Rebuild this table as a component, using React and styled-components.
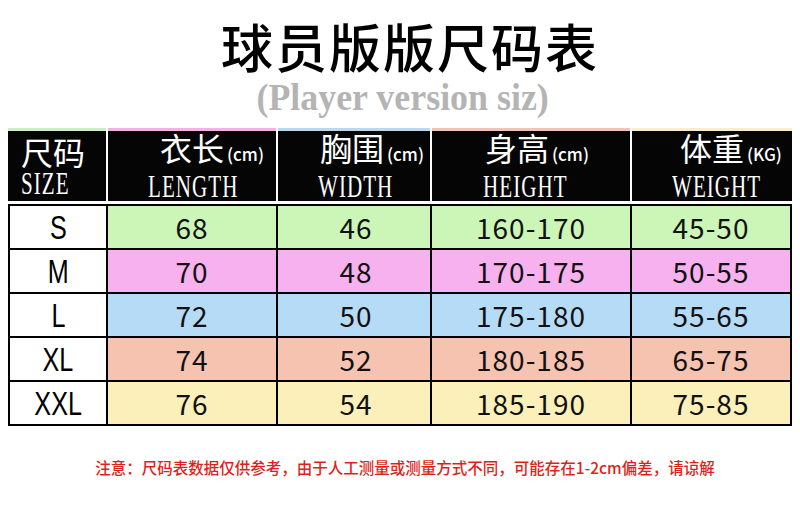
import React from "react";
import styled, { createGlobalStyle } from "styled-components";

const Global = createGlobalStyle`
  html, body { margin: 0; padding: 0; background: #fff; }
  body { width: 800px; height: 511px; overflow: hidden; }
`;

const Page = styled.div`
  width: 800px;
  height: 511px;
  display: flex;
  flex-direction: column;
  align-items: center;
  background: #fff;
`;

const Title = styled.h1`
  margin: 18px 0 0;
  padding-left: 20px;
  font-family: "Noto Sans CJK SC", sans-serif;
  font-weight: 500;
  font-size: 52px;
  line-height: 56px;
  color: #000;
  letter-spacing: 2px;
`;

const Subtitle = styled.div`
  margin-top: 6px;
  padding-left: 5px;
  font-family: "Liberation Serif", serif;
  font-weight: 700;
  font-size: 37px;
  line-height: 36px;
  color: #b4b4b4;
  transform: scaleX(0.97);
`;

const Table = styled.div`
  width: 784px;
  margin-top: 12px;
  display: flex;
  flex-direction: column;
  gap: 3px;
`;

const HeaderRow = styled.div`
  display: grid;
  grid-template-columns: 98px 168px 152px 198px 160px;
  column-gap: 2px;
`;

const HeadCell = styled.div`
  height: 70px;
  background: #050505;
  border-top: 3px solid ${(p) => p.$strip};
  color: #fff;
  display: flex;
  flex-direction: column;
  justify-content: center;
  padding-left: ${(p) => p.$pad}px;
`;

const HeadCn = styled.div`
  font-family: "Noto Sans CJK SC", sans-serif;
  font-weight: 400;
  font-size: 32px;
  line-height: 32px;
  margin-top: 2px;
  padding-left: ${(p) => p.$indent || 0}px;
  white-space: nowrap;
`;

const Unit = styled.span`
  font-family: "Noto Sans CJK SC", sans-serif;
  font-size: 17px;
  font-weight: 500;
  margin-left: 3px;
`;

const HeadEn = styled.div`
  font-family: "Liberation Serif", serif;
  font-size: 31px;
  line-height: 33px;
  letter-spacing: 1.5px;
  white-space: nowrap;
  transform: scaleX(0.68);
  transform-origin: left center;
`;

const Body = styled.div`
  display: grid;
  grid-template-columns: 96px 168px 152px 198px 158px;
  grid-auto-rows: 42px;
  gap: 2px;
  padding: 2px;
  background: #000;
`;

const Cell = styled.div`
  background: ${(p) => p.$bg};
  display: flex;
  align-items: center;
  justify-content: center;
  font-family: "Noto Sans CJK SC", sans-serif;
  font-size: 28px;
  color: #111;
  letter-spacing: 1px;
  padding-left: ${(p) => p.$shift || 0}px;
`;

const SizeLabel = styled.span`
  display: inline-block;
  font-family: "Liberation Sans", sans-serif;
  font-size: 34px;
  color: #000;
  letter-spacing: 0;
  transform: scaleX(0.74);
`;

const Note = styled.div`
  margin-top: 31px;
  padding-left: 10px;
  font-family: "Noto Sans CJK SC", sans-serif;
  font-weight: 500;
  font-size: 15.5px;
  line-height: 20px;
  color: #e01f1a;
  white-space: nowrap;
`;

const headers = [
  { cn: "尺码", unit: "", en: "SIZE", strip: "#cdeec6", pad: 13, indent: 0 },
  { cn: "衣长", unit: "(cm)", en: "LENGTH", strip: "#f2b3e4", pad: 40, indent: 12 },
  { cn: "胸围", unit: "(cm)", en: "WIDTH", strip: "#bcd8ee", pad: 40, indent: 2 },
  { cn: "身高", unit: "(cm)", en: "HEIGHT", strip: "#f3c2ba", pad: 51, indent: 2 },
  { cn: "体重", unit: "(KG)", en: "WEIGHT", strip: "#f9eecb", pad: 40, indent: 8 },
];

const rows = [
  { size: "S", bg: "#cbf6b8", v: ["68", "46", "160-170", "45-50"] },
  { size: "M", bg: "#f6b1ee", v: ["70", "48", "170-175", "50-55"] },
  { size: "L", bg: "#b5dbf6", v: ["72", "50", "175-180", "55-65"] },
  { size: "XL", bg: "#f5c3b0", v: ["74", "52", "180-185", "65-75"] },
  { size: "XXL", bg: "#fbf0b9", v: ["76", "54", "185-190", "75-85"] },
];

const shifts = [0, 0, 4, 0, 0];

export default function App() {
  return (
    <Page>
      <Global />
      <Title>球员版版尺码表</Title>
      <Subtitle>(Player version siz)</Subtitle>
      <Table>
        <HeaderRow>
          {headers.map((h) => (
            <HeadCell key={h.en} $strip={h.strip} $pad={h.pad}>
              <HeadCn $indent={h.indent}>
                {h.cn}
                {h.unit && <Unit>{h.unit}</Unit>}
              </HeadCn>
              <HeadEn>{h.en}</HeadEn>
            </HeadCell>
          ))}
        </HeaderRow>
        <Body>
          {rows.map((r) => (
            <React.Fragment key={r.size}>
              <Cell $bg="#fff">
                <SizeLabel>{r.size}</SizeLabel>
              </Cell>
              {r.v.map((val, i) => (
                <Cell key={i} $bg={r.bg} $shift={shifts[i + 1]}>
                  {val}
                </Cell>
              ))}
            </React.Fragment>
          ))}
        </Body>
      </Table>
      <Note>注意：尺码表数据仅供参考，由于人工测量或测量方式不同，可能存在1-2cm偏差，请谅解</Note>
    </Page>
  );
}
